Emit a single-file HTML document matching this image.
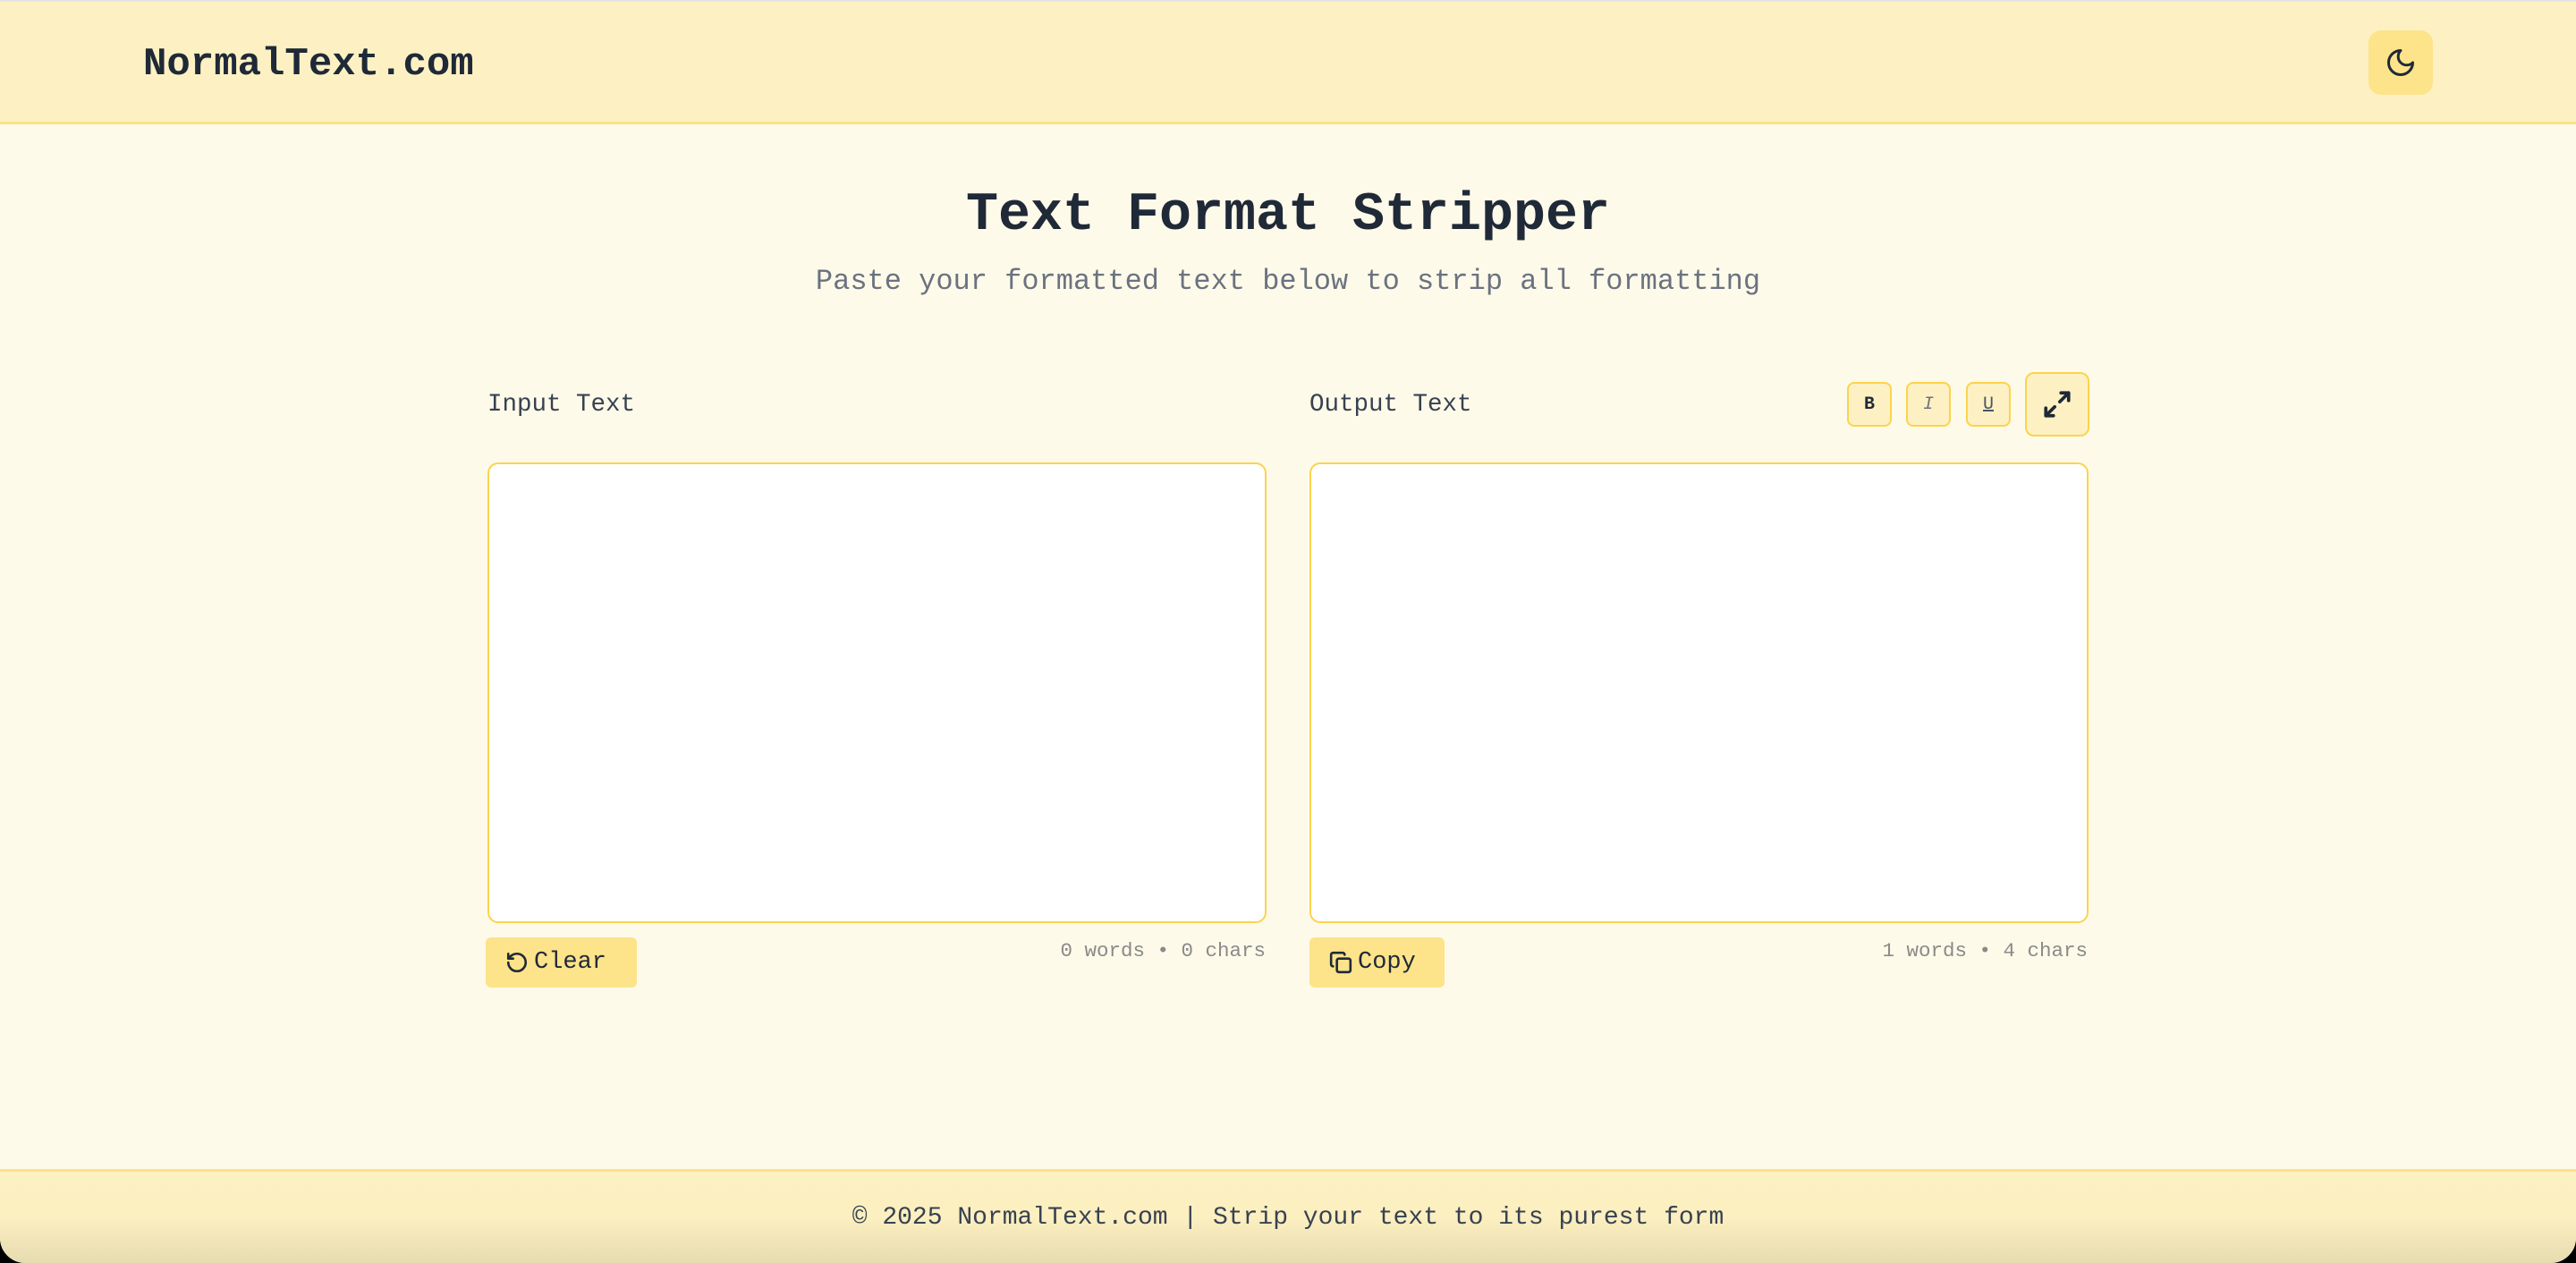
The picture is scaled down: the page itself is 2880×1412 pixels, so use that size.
<!DOCTYPE html>
<html><head><meta charset="utf-8"><style>
*{box-sizing:border-box;margin:0;padding:0}
html,body{width:2880px;height:1412px;overflow:hidden;background:#000}
.page{position:absolute;left:0;top:0;width:2880px;height:1412px;background:#fefae9;border-radius:0 0 28px 28px;overflow:hidden;font-family:"Liberation Mono",monospace;color:#1f2937}
.topline{position:absolute;left:0;top:0;width:2880px;height:2px;background:#e3e3e3}
header{position:absolute;left:0;top:2px;width:2880px;height:137px;background:#fdf1c3;border-bottom:3px solid #fde184}
.logo{position:absolute;left:160px;top:40px;font-size:44px;font-weight:bold;line-height:60px}
.moon{position:absolute;left:2648px;top:32px;width:72px;height:72px;border-radius:14px;background:#fde38a;display:flex;align-items:center;justify-content:center}
h1{position:absolute;left:0;width:2880px;top:206px;text-align:center;font-size:60px;font-weight:bold;line-height:70px}
.sub{position:absolute;left:0;width:2880px;top:295px;text-align:center;font-size:32px;color:#6b7280;line-height:40px}
.lbl{position:absolute;top:436px;font-size:27.5px;color:#374151;line-height:34px}
.ta{position:absolute;top:517px;width:871px;height:515px;background:#fff;border:2px solid #fcd34d;border-radius:12px}
.fb{position:absolute;top:427px;width:50px;height:50px;border:2px solid #fcd34d;border-radius:8px;background:#fdf1c3;display:flex;align-items:center;justify-content:center;font-size:20px;color:#1f2937}
.btn{position:absolute;top:1048px;height:56px;background:#fde38a;border-radius:6px;display:flex;align-items:center;padding-left:22px;font-size:27px;color:#1f2937;gap:6px}
.stat{position:absolute;top:1048px;font-size:22.5px;color:#8a8a8a;text-align:right;width:600px;line-height:30px}
footer{position:absolute;left:0;top:1307px;width:2880px;height:105px;background:linear-gradient(#fdf1c3 0%,#fcefc0 50%,#e6dcb0 100%);border-top:3px solid #fde184}
.ft{position:absolute;left:0;width:2880px;top:36px;text-align:center;font-size:28px;color:#374151}
</style></head><body><div class="page">
<div class="topline"></div>
<header><div class="logo">NormalText.com</div>
<div class="moon"><svg width="36" height="36" viewBox="0 0 24 24" fill="none" stroke="#1f2937" stroke-width="2" stroke-linecap="round" stroke-linejoin="round"><path d="M12 3a6 6 0 0 0 9 9 9 9 0 1 1-9-9Z"/></svg></div></header>
<h1>Text Format Stripper</h1>
<div class="sub">Paste your formatted text below to strip all formatting</div>
<div class="lbl" style="left:545px">Input Text</div>
<div class="lbl" style="left:1464px">Output Text</div>
<div class="fb" style="left:2065px;font-weight:bold">B</div>
<div class="fb" style="left:2131px;font-style:italic;color:#6b7280">I</div>
<div class="fb" style="left:2198px;text-decoration:underline;color:#4b5563">U</div>
<div class="fb" style="left:2264px;top:416px;width:72px;height:72px;border-radius:10px"><svg width="34" height="34" viewBox="0 0 24 24" fill="none" stroke="#1f2937" stroke-width="2.6" stroke-linecap="round" stroke-linejoin="round"><path d="M15 3h6v6M21 3l-7 7M9 21H3v-6M3 21l7-7"/></svg></div>
<div class="ta" style="left:545px"></div>
<div class="ta" style="left:1464px"></div>
<div class="btn" style="left:543px;width:169px"><svg width="26" height="26" viewBox="0 0 24 24" fill="none" stroke="#1f2937" stroke-width="2.4" stroke-linecap="round" stroke-linejoin="round"><path d="M3 12a9 9 0 1 0 9-9 9.75 9.75 0 0 0-6.74 2.74L3 8"/><path d="M3 3v5h5"/></svg>Clear</div>
<div class="stat" style="left:815px">0 words • 0 chars</div>
<div class="btn" style="left:1464px;width:151px"><svg width="26" height="26" viewBox="0 0 24 24" fill="none" stroke="#1f2937" stroke-width="2.4" stroke-linecap="round" stroke-linejoin="round"><rect x="8" y="8" width="14" height="14" rx="2"/><path d="M4 16c-1.1 0-2-.9-2-2V4c0-1.1.9-2 2-2h10c1.1 0 2 .9 2 2"/></svg>Copy</div>
<div class="stat" style="left:1734px">1 words • 4 chars</div>
<footer><div class="ft">© 2025 NormalText.com | Strip your text to its purest form</div></footer>
</div></body></html>
